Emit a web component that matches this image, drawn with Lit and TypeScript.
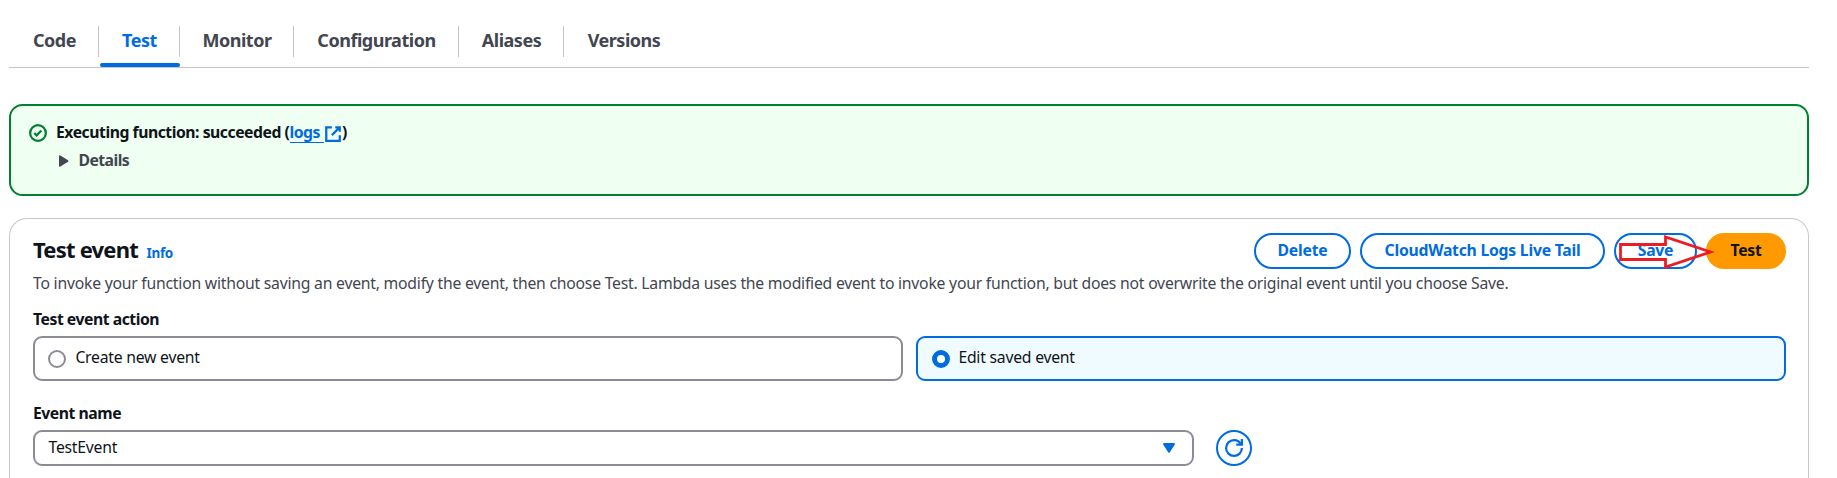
import { LitElement, html, css } from "lit";
import { customElement, state } from "lit/decorators.js";
import { classMap } from "lit/directives/class-map.js";

const TABS = ["Code", "Test", "Monitor", "Configuration", "Aliases", "Versions"];

@customElement("app-root")
export class AppRoot extends LitElement {
  @state() private tab = "Test";
  @state() private mode = "edit";

  static styles = css`
    :host {
      display: block;
      height: 478px;
      overflow: hidden;
      background: #fff;
      color: #0f141a;
      font: 400 15.75px/22px "Noto Sans", "Open Sans", sans-serif;
      letter-spacing: -0.236px;
    }
    * { box-sizing: border-box; }
    svg { display: block; fill: none; stroke: currentColor; stroke-width: 2; overflow: visible; }
    .page { display: flex; flex-direction: column; height: 478px; padding: 0 28px 0 9px; }
    .tabs {
      display: grid;
      grid-template-columns: 90px 81px 114px 165px 105px 119px;
      flex: none;
      height: 68px;
      padding-top: 26px;
      border-bottom: 1px solid #c6c6cd;
    }
    .tab {
      display: flex;
      flex-direction: column;
      justify-content: space-between;
      height: 41px;
      color: #424650;
      font-size: 18px;
      font-weight: 700;
      letter-spacing: -0.48px;
      white-space: nowrap;
      cursor: pointer;
    }
    .tab-label { height: 31px; padding: 3px 0 0 1px; line-height: 22px; text-align: center; border-right: 1px solid #c6c6cd; }
    .tab:first-child .tab-label { padding-left: 2px; }
    .tab:last-child .tab-label { border-right: 0; }
    .tab-bar { height: 4px; margin-left: 1px; border-radius: 4px; }
    .active { color: #006ce0; }
    .active .tab-bar { background: #006ce0; }
    .alert {
      display: flex;
      flex: none;
      gap: 9px;
      height: 92px;
      margin-top: 36px;
      padding: 15px 18px;
      border: 2px solid #00802f;
      border-radius: 13.5px;
      background: #effff1;
    }
    .alert-icon { margin-top: 3px; color: #00802f; }
    .strong { font-weight: 700; letter-spacing: -0.47px; }
    .alert-title { display: flex; height: 28px; white-space: pre; }
    .alert-text { width: 233.5px; }
    .link { display: flex; height: 22px; border-bottom: 1px solid #006ce0; color: #006ce0; }
    .link-text { width: 34.5px; }
    .ext { width: 18px; margin-top: 4px; color: #006ce0; }
    .details { display: flex; align-items: center; gap: 9.5px; padding-left: 3px; color: #424650; letter-spacing: -0.55px; }
    .tri { fill: currentColor; stroke: none; margin-top: 1px; }
    .panel {
      flex: 1;
      margin-top: 22px;
      padding: 14px 22px 0 23px;
      border: 1px solid #c6c6cd;
      border-bottom: 0;
      border-radius: 18px 18px 0 0;
    }
    .head { display: flex; justify-content: space-between; height: 36px; }
    .title-row { display: flex; align-items: baseline; gap: 8.5px; }
    .title { margin: 0; font-size: 22px; line-height: 32px; font-weight: 700; letter-spacing: -0.79px; }
    .info { color: #006ce0; font-size: 13.5px; font-weight: 700; letter-spacing: -0.3px; }
    .actions { position: relative; display: grid; grid-template-columns: 97px 245px 83px 80px; gap: 9px; }
    .btn {
      display: flex;
      justify-content: center;
      padding: 4px 0 0;
      border: 2px solid #006ce0;
      border-radius: 18px;
      background: #fff;
      color: #006ce0;
      font: inherit;
      font-weight: 700;
      letter-spacing: -0.24px;
      white-space: nowrap;
    }
    .primary { border-color: #ff9900; background: #ff9900; color: #0f141a; }
    .arrow { position: absolute; left: 364px; top: 0; stroke: #ed1c24; stroke-width: 2.8; }
    .desc { margin: 3px 0 0; color: #424650; white-space: nowrap; }
    .field-label { margin-top: 14px; height: 28px; }
    .tiles { display: grid; grid-template-columns: 1fr 1fr; gap: 13px; }
    .tile {
      display: flex;
      gap: 9px;
      height: 45px;
      padding: 8px 13.4px;
      border: 2px solid #8c8c94;
      border-radius: 9px;
    }
    .radio { width: 18px; height: 18px; margin-top: 4px; border: 2px solid #8c8c94; border-radius: 50%; background: #fff; }
    .selected { gap: 8.4px; padding-left: 14px; border-color: #006ce0; background: #f0fbff; }
    .selected .radio { border: 5.2px solid #006ce0; }
    .name-label { margin-top: 21px; height: 28px; }
    .name-row { display: flex; gap: 22px; }
    .select {
      display: flex;
      justify-content: space-between;
      width: 1161px;
      height: 36px;
      padding: 4px 17px 0 13.5px;
      border: 2px solid #8c8c94;
      border-radius: 9px;
    }
    .caret { margin-top: 7px; fill: #006ce0; stroke: #006ce0; stroke-linejoin: round; }
    .refresh { display: grid; place-items: center; width: 36px; height: 36px; border: 2px solid #006ce0; border-radius: 50%; color: #006ce0; }
  `;

  private tile(id: string, label: string) {
    return html`<div class=${classMap({ tile: true, selected: this.mode === id })} @click=${() => (this.mode = id)}>
      <span class="radio"></span><span>${label}</span>
    </div>`;
  }

  render() {
    return html`<div class="page">
      <nav class="tabs">
        ${TABS.map((t) => html`<div class=${classMap({ tab: true, active: t === this.tab })} @click=${() => (this.tab = t)}>
          <div class="tab-label">${t}</div><div class="tab-bar"></div>
        </div>`)}
      </nav>
      <section class="alert">
        <svg class="alert-icon" width="18" height="18" viewBox="0 0 16 16"><circle cx="8" cy="8" r="7"/><path d="M4.7 8l2.1 2.1L11 5.8"/></svg>
        <div>
          <div class="alert-title strong"><span class="alert-text">Executing function: succeeded (</span><a class="link"><span class="link-text">logs</span></a><svg class="ext" width="18" height="18" viewBox="0 0 16 16"><path d="M10 2h4v4M7 9l7-7M14 9.05V14H2V2h5"/></svg><span>)</span></div>
          <div class="details strong"><svg class="tri" width="10" height="12" viewBox="0 0 10 12"><path d="M0 1.2Q0-.3 1.4.4L9 5.2q1 .8 0 1.6L1.4 11.6Q0 12.3 0 10.8z"/></svg><span>Details</span></div>
        </div>
      </section>
      <section class="panel">
        <div class="head">
          <div class="title-row"><h2 class="title">Test event</h2><a class="info">Info</a></div>
          <div class="actions">
            <button class="btn">Delete</button>
            <button class="btn">CloudWatch Logs Live Tail</button>
            <button class="btn">Save</button>
            <button class="btn primary">Test</button>
            <svg class="arrow" width="96" height="36" viewBox="0 0 96 36"><path d="M2.5 11.5H47.5V4L92.5 19L47.5 34V26.5H2.5z"/></svg>
          </div>
        </div>
        <p class="desc">To invoke your function without saving an event, modify the event, then choose Test. Lambda uses the modified event to invoke your function, but does not overwrite the original event until you choose Save.</p>
        <div class="field-label strong">Test event action</div>
        <div class="tiles">${this.tile("create", "Create new event")}${this.tile("edit", "Edit saved event")}</div>
        <div class="name-label strong">Event name</div>
        <div class="name-row">
          <div class="select"><span>TestEvent</span><svg class="caret" width="12" height="10" viewBox="0 0 12 10"><path d="M1 1h10L6 8.8z"/></svg></div>
          <div class="refresh"><svg width="18" height="18" viewBox="0 0 16 16"><path d="M10 5h5V0"/><path d="M15 8a6.96 6.96 0 0 1-7 7 6.96 6.96 0 0 1-7-7 6.96 6.96 0 0 1 7-7 6.87 6.87 0 0 1 6.3 4"/></svg></div>
        </div>
      </section>
    </div>`;
  }
}
